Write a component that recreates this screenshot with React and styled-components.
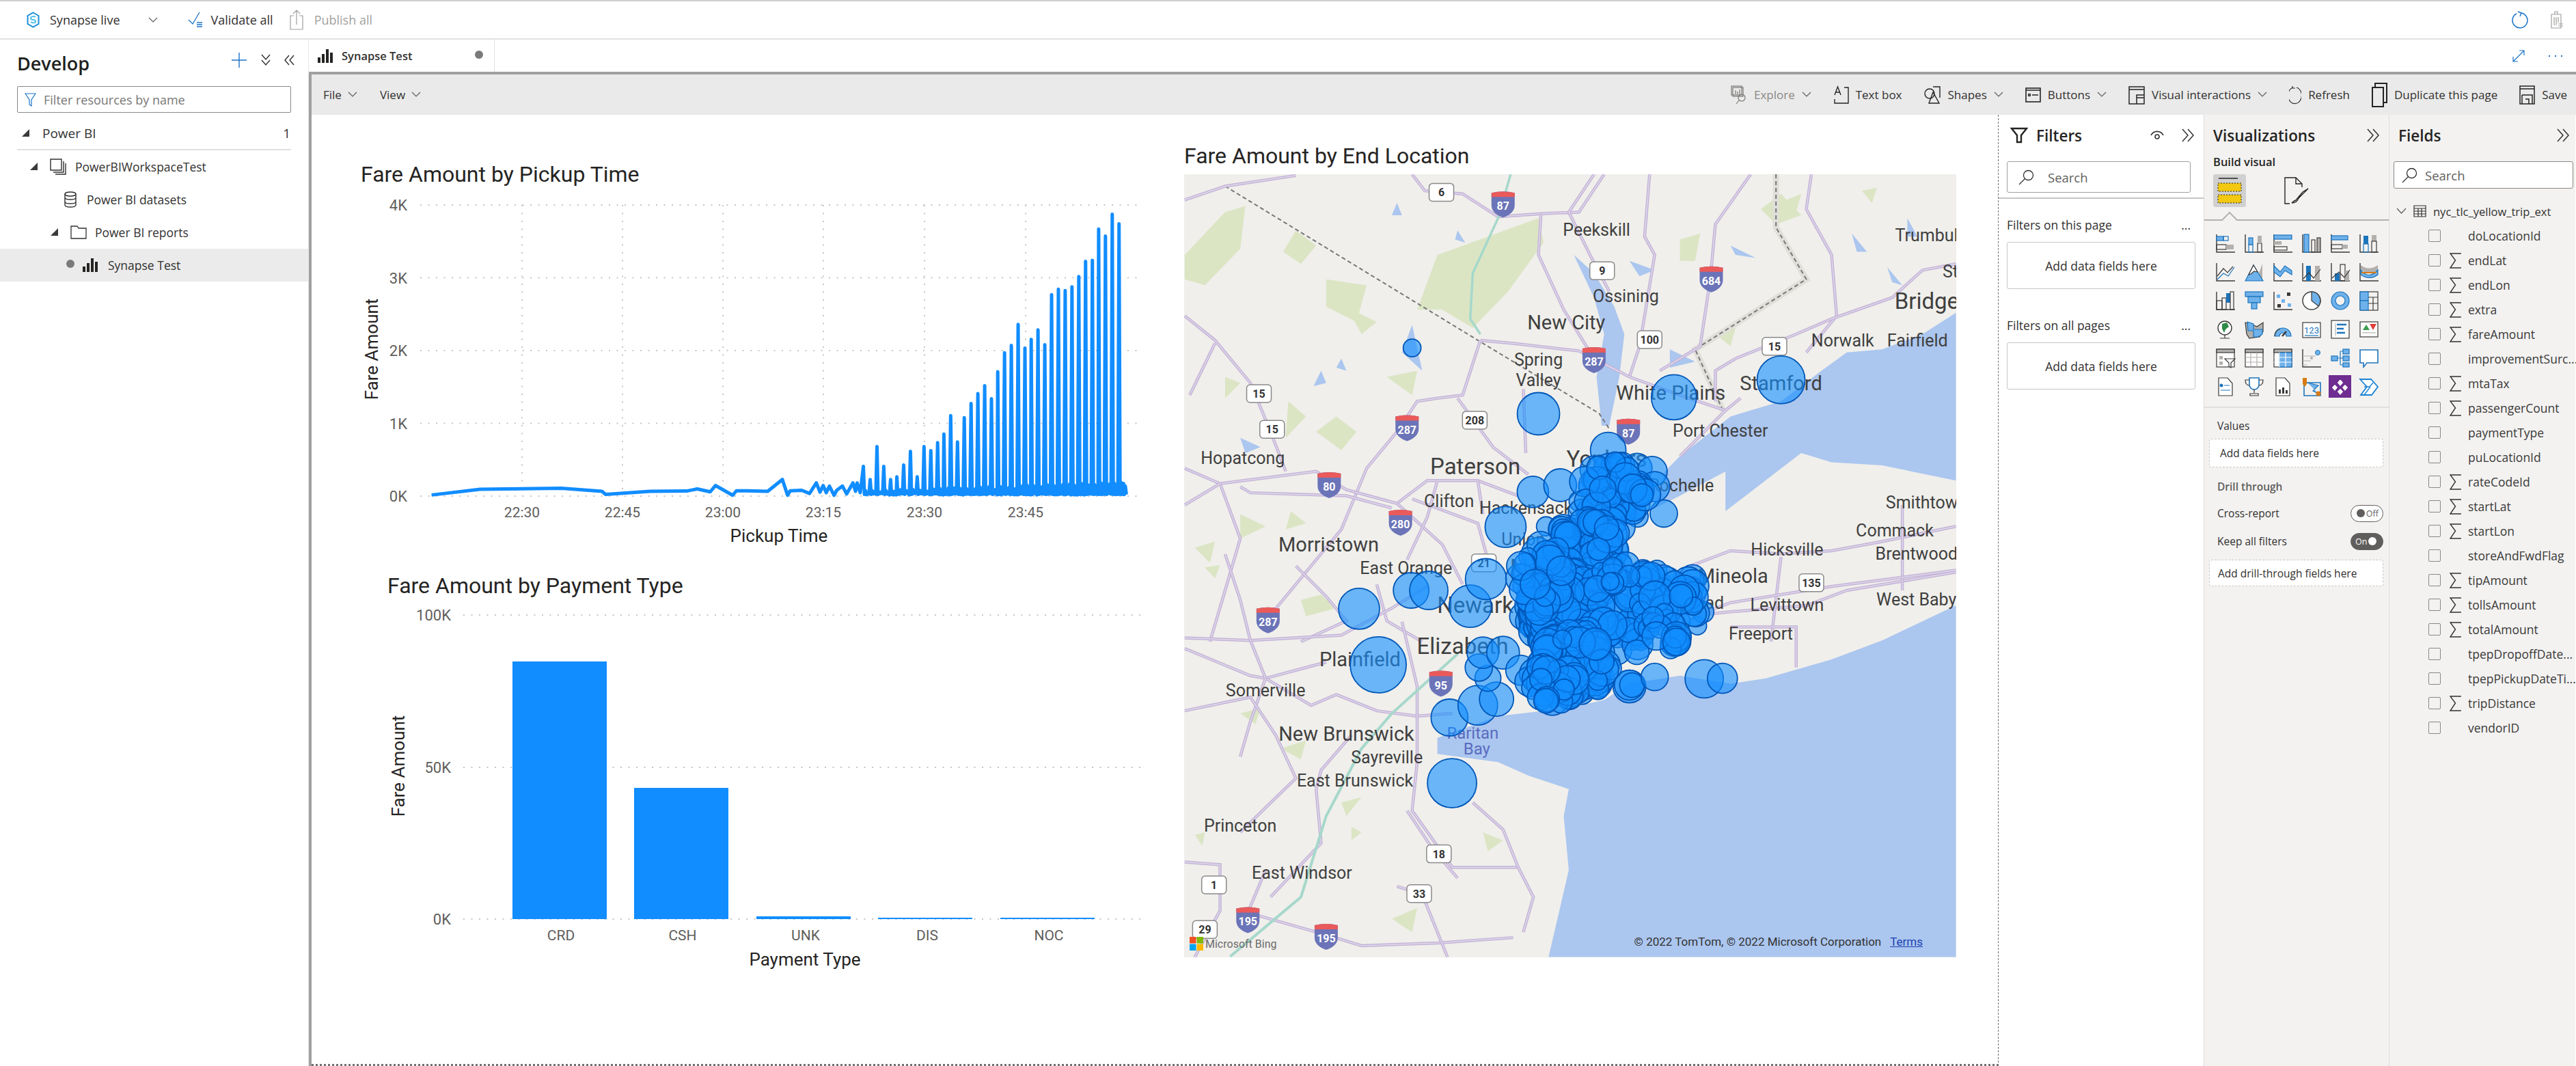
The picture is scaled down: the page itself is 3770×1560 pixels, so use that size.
import React from 'react'
import styled, { createGlobalStyle } from 'styled-components'

const UI_FONT = '"Open Sans", "Noto Sans", sans-serif'
const CHART_FONT = 'Roboto, "Liberation Sans", sans-serif'

const GlobalStyle = createGlobalStyle`
  html, body { margin: 0; padding: 0; background: #fff; }
  body { font-family: ${UI_FONT}; color: #323130; }
  * { box-sizing: border-box; }
`

const Page = styled.div`
  width: 3770px;
  height: 1560px;
  overflow: hidden;
  display: flex;
  flex-direction: column;
  border-top: 2px solid #cfcfcf;
  background: #fff;
`

const TopBar = styled.header`
  height: 56px;
  flex: none;
  display: flex;
  align-items: center;
  border-bottom: 2px solid #e1e1e1;
  font-size: 18px;
`

const TopItem = styled.div`
  display: flex;
  align-items: center;
  gap: ${p => p.$gap || 12}px;
  margin-left: ${p => p.$ml || 0}px;
  color: ${p => (p.$off ? '#a19f9d' : '#323130')};
`

const TopRight = styled.div`
  margin-left: auto;
  padding-right: 18px;
  display: flex;
  align-items: center;
  gap: 32px;
`

const Body = styled.div`
  flex: 1;
  min-height: 0;
  display: flex;
`

const Sidebar = styled.aside`
  width: 452px;
  flex: none;
  border-right: 1px solid #e6e6e6;
`

const SideHead = styled.div`
  height: 68px;
  padding: 0 25px;
  display: flex;
  align-items: center;
`

const SideTitle = styled.h2`
  margin: 0;
  font-size: 27px;
  font-weight: 600;
  color: #201f1e;
  flex: 1;
`

const SideActions = styled.div`
  display: flex;
  align-items: center;
  gap: 20px;
  margin-right: -5px;
  margin-top: -8px;
`

const FilterBox = styled.div`
  height: 39px;
  margin: 0 25px;
  border: 1px solid #8a8886;
  border-radius: 2px;
  display: flex;
  align-items: center;
  gap: 11px;
  padding-left: 10px;
  font-size: 18px;
  color: #797775;
`

const TreeRow = styled.div`
  height: 48px;
  display: flex;
  align-items: center;
  padding-left: ${p => p.$indent}px;
  font-size: ${p => p.$size || 17.5}px;
  color: #323130;
  background: ${p => (p.$selected ? '#ebebeb' : 'transparent')};
`

const RootRow = styled(TreeRow)`
  margin: 7px 25px 0;
  padding-left: 7px;
  height: 48px;
  border-bottom: 2px solid #e1e1e1;
  justify-content: flex-start;
`

const RowEnd = styled.span`
  margin-left: auto;
  padding-right: 1px;
`

const Tri = styled.span`
  width: 0;
  height: 0;
  margin-top: -2px;
  border-left: 11px solid transparent;
  border-bottom: 11px solid #3b3a39;
  margin-right: ${p => p.$mr}px;
`

const Dot = styled.span`
  width: 12px;
  height: 12px;
  margin-top: -4px;
  border-radius: 50%;
  background: #7a7a7a;
  margin-right: ${p => p.$mr || 0}px;
`

const Main = styled.main`
  flex: 1;
  min-width: 0;
  display: flex;
  flex-direction: column;
`

const TabRow = styled.div`
  height: 47px;
  flex: none;
  display: flex;
  align-items: center;
`

const Tab = styled.div`
  width: 272px;
  height: 100%;
  padding: 0 16px 0 13px;
  display: flex;
  align-items: center;
  gap: 12px;
  border-right: 1px solid #e1e1e1;
  font-size: 16.5px;
  color: #323130;
  span:last-child { margin-left: auto; margin-right: 0; }
`

const Frame = styled.div`
  flex: 1;
  min-height: 0;
  display: flex;
  flex-direction: column;
  border-top: 4px solid #a0a0a0;
  border-left: 4px solid #a0a0a0;
`

const Ribbon = styled.div`
  height: 59px;
  flex: none;
  background: #eaeaea;
  display: flex;
  align-items: center;
  padding: 0 13px 0 17px;
  font-size: 17px;
`

const RibbonMenu = styled.div`
  display: flex;
  align-items: center;
  gap: 9px;
  margin-right: 33px;
`

const RibbonRight = styled.div`
  margin-left: auto;
  display: flex;
  align-items: center;
  gap: 32px;
`

const RibbonItem = styled.div`
  display: flex;
  align-items: center;
  gap: 10px;
  color: ${p => (p.$off ? '#8a8886' : '#323130')};
`

const Workspace = styled.div`
  flex: 1;
  min-height: 0;
  display: flex;
`

const Canvas = styled.section`
  width: 2469px;
  flex: none;
  display: flex;
  background: #fff;
  border-right: 1px dashed #707070;
  border-bottom: 3px dotted #707070;
`

const LeftColumn = styled.div`
  width: 1277px;
  flex: none;
  padding-top: 66px;
`

const RightColumn = styled.div`
  padding-top: 39px;
`

const ChartTitle = styled.h3`
  margin: 0;
  height: 40px;
  line-height: 42px;
  padding-left: ${p => p.$left || 0}px;
  font-family: ${CHART_FONT};
  font-size: 32px;
  font-weight: 400;
  color: #252423;
  white-space: nowrap;
`

const ChartSvg = styled.svg`
  display: block;
  font-family: ${CHART_FONT};
`

const MapBox = styled.div`
  position: relative;
  width: 1130px;
  height: 1146px;
  margin-top: 8px;
  overflow: hidden;
  background: #f0efeb;
  font-family: ${CHART_FONT};
`

const MapLayer = styled.svg`
  position: absolute;
  left: 0;
  top: 0;
`

const MapLabel = styled.span`
  position: absolute;
  transform: translate(-50%, -50%);
  white-space: nowrap;
  font-size: ${p => p.$size}px;
  color: ${p => p.$color || '#3f3f3f'};
`

const Attribution = styled.div`
  position: absolute;
  right: 49px;
  bottom: 13px;
  display: flex;
  gap: 13px;
  font-size: 17px;
  color: #333;
  a { color: #1a3fb0; text-decoration: underline; }
`

const BingMark = styled.div`
  position: absolute;
  left: 8px;
  bottom: 10px;
  display: flex;
  align-items: center;
  gap: 3px;
  font-size: 16px;
  color: #6b6b6b;
`

const Panel = styled.aside`
  width: ${p => p.$w}px;
  flex: none;
  background: ${p => p.$bg || '#f3f2f1'};
  border-right: ${p => (p.$line ? '1px solid #dcdcdc' : 'none')};
`

const PanelHead = styled.div`
  height: 60px;
  padding: 0 ${p => p.$right || 13}px 0 ${p => p.$left}px;
  display: flex;
  align-items: center;
  gap: 12px;
  font-size: 22.5px;
  font-weight: 600;
  color: #252423;
  div { margin-left: auto; display: flex; align-items: center; gap: 26px; }
`

const SearchBox = styled.div`
  height: ${p => p.$h}px;
  width: ${p => p.$w}px;
  margin: 8px 0 0 ${p => p.$left}px;
  background: #fff;
  border: 1px solid ${p => p.$line || '#a19f9d'};
  border-radius: 3px;
  display: flex;
  align-items: center;
  gap: ${p => p.$gap}px;
  padding-left: ${p => p.$pad}px;
  font-size: ${p => p.$size || 18.5}px;
  color: #605e5c;
`

const Divider = styled.div`
  height: 2px;
  background: #c8c6c4;
  margin-top: 7px;
`

const FilterTitle = styled.div`
  display: flex;
  justify-content: space-between;
  align-items: center;
  padding: 0 19px 0 12px;
  margin-top: ${p => p.$mt}px;
  height: 26px;
  font-size: 17.5px;
  color: #323130;
`

const FilterDrop = styled.div`
  width: 276px;
  height: 69px;
  margin: 12px 0 0 12px;
  background: #fff;
  border: 1px solid #c8c6c4;
  border-radius: 3px;
  display: flex;
  align-items: center;
  justify-content: center;
  font-size: 17.5px;
  color: #323130;
`

const BuildLabel = styled.div`
  height: 22px;
  margin-top: -2px;
  padding-left: 13px;
  line-height: 22px;
  font-size: 16.5px;
  font-weight: 600;
  color: #252423;
`

const VizTabs = styled.div`
  position: relative;
  height: 68px;
  margin-top: 7px;
  padding-left: 13px;
  display: flex;
  align-items: flex-start;
  gap: 50px;
  border-bottom: 2px solid #b3b0ad;
  &::after {
    content: '';
    position: absolute;
    left: 29px;
    bottom: -8px;
    width: 14px;
    height: 14px;
    background: #f3f2f1;
    border-left: 2px solid #b3b0ad;
    border-top: 2px solid #b3b0ad;
    transform: rotate(45deg);
  }
`

const VizTabButton = styled.div`
  width: 48px;
  height: 48px;
  border-radius: 3px;
  display: flex;
  align-items: center;
  justify-content: center;
  background: ${p => (p.$active ? '#d0d0d0' : 'transparent')};
`

const VizGrid = styled.div`
  display: grid;
  grid-template-columns: repeat(6, 28px);
  grid-auto-rows: 28px;
  gap: 14px;
  padding: 19px 0 15px 17px;
  border-bottom: 2px solid #e1dfdd;
`

const WellLabel = styled.div`
  padding-left: 19px;
  margin-top: ${p => p.$mt}px;
  height: 22px;
  line-height: 22px;
  font-size: 15.5px;
  font-weight: ${p => (p.$bold ? 600 : 400)};
  color: ${p => (p.$bold ? '#605e5c' : '#323130')};
`

const Well = styled.div`
  width: 255px;
  height: ${p => p.$h}px;
  margin: ${p => p.$mt}px 0 0 7px;
  padding-left: ${p => p.$pad}px;
  background: #fff;
  border: 1px dashed #c8c6c4;
  border-radius: 3px;
  display: flex;
  align-items: center;
  font-size: 15.5px;
  color: #323130;
`

const SwitchRow = styled.div`
  height: 26px;
  width: 262px;
  margin-top: ${p => p.$mt}px;
  padding-left: 19px;
  display: flex;
  align-items: center;
  justify-content: space-between;
  font-size: 15.5px;
  color: #323130;
`

const Switch = styled.div`
  width: 48px;
  height: 25px;
  border-radius: 13px;
  border: 1px solid #605e5c;
  background: ${p => (p.$on ? '#605e5c' : '#fff')};
  color: ${p => (p.$on ? '#fff' : '#605e5c')};
  display: flex;
  flex-direction: ${p => (p.$on ? 'row-reverse' : 'row')};
  align-items: center;
  justify-content: flex-end;
  gap: 2px;
  padding: 0 6px;
  font-size: 12.5px;
  &::before {
    content: '';
    width: 12px;
    height: 12px;
    border-radius: 50%;
    background: ${p => (p.$on ? '#fff' : '#605e5c')};
  }
`

const TableRow = styled.div`
  height: 36px;
  margin-top: 15px;
  padding-left: 10px;
  display: flex;
  align-items: center;
  font-size: 16.5px;
  color: #323130;
  white-space: nowrap;
`

const FieldRow = styled.div`
  height: 36px;
  display: flex;
  align-items: center;
  padding-left: 57px;
  font-size: 17.5px;
  color: #3b3a39;
  white-space: nowrap;
`

const CheckBox = styled.span`
  width: 18px;
  height: 18px;
  flex: none;
  background: #f3f2f1;
  border: 1px solid #8a8886;
  border-radius: 2px;
`

const SigmaSlot = styled.span`
  width: 40px;
  flex: none;
  padding-left: 13px;
  display: flex;
`

/* icons */
const Line = styled.svg`
  display: block;
  flex: none;
  fill: none;
  stroke: ${p => p.$c || '#323130'};
  stroke-width: ${p => p.$sw || 1.2};
`

const Chevron = ({ c = '#605e5c' }) => (
  <Line width="14" height="9" viewBox="0 0 14 9" $c={c}><path d="M1 1l6 6 6-6" /></Line>
)
const DoubleRight = ({ c = '#323130' }) => (
  <Line width="19" height="20" viewBox="0 0 19 20" $c={c} $sw={1.5}><path d="M1 1l8 9-8 9M9 1l8 9-8 9" /></Line>
)
const Magnifier = () => (
  <Line width="23" height="23" viewBox="0 0 23 23" $c="#323130" $sw={1.3}>
    <circle cx="14.5" cy="8.5" r="7" /><path d="M9.5 13.5L1 22" />
  </Line>
)
const Bars = ({ c = '#252423' }) => (
  <svg width="23" height="20" viewBox="0 0 23 20" fill={c} style={{ flex: 'none' }}>
    <rect x="0" y="12" width="4" height="8" /><rect x="6" y="7" width="4" height="13" />
    <rect x="12" y="0" width="4" height="20" /><rect x="18" y="5" width="4" height="15" />
  </svg>
)
const Sigma = () => (
  <Line width="17" height="23" viewBox="0 0 17 23" $c="#323130" $sw={1.4}><path d="M16 2V1H1l7.5 10L1 22h15v-1" /></Line>
)
const SynapseMark = () => (
  <Line width="19" height="24" viewBox="0 0 19 24" $c="#1a8fd8" $sw={2}>
    <path d="M9.5 1.5l8 4.5v12l-8 4.5-8-4.5V6z" /><path d="M13 8c-3-2-7-1-7 2s7 1 7 4-4 3-7 1" stroke="#50c0e8" />
  </Line>
)

const ribbonIcons = {
  explore: (
    <Line width="24" height="28" viewBox="0 0 24 28" $c="#797775">
      <rect x="1" y="1" width="15" height="13" /><rect x="3" y="3" width="15" height="13" /><path d="M7 7v6M10 9v4M13 6v7" />
      <circle cx="16" cy="18" r="5" /><path d="M12 22l-4 5" />
    </Line>
  ),
  text: (
    <Line width="23" height="28" viewBox="0 0 23 28" $c="#252423" $sw={1.4}>
      <path d="M16 3h6v23H2v-6" /><path d="M2 14L6.5 2 11 14M3.5 10h6" />
    </Line>
  ),
  shapes: (
    <Line width="25" height="28" viewBox="0 0 25 28" $c="#252423" $sw={1.4}>
      <circle cx="8" cy="12" r="7" /><path d="M13 2h10v16M13 10l-6 16h15z" />
    </Line>
  ),
  buttons: (
    <Line width="23" height="24" viewBox="0 0 23 24" $c="#252423" $sw={1.6}>
      <rect x="1" y="2" width="21" height="20" /><circle cx="6" cy="12" r="1.5" /><path d="M10 12h9M1 5h21" />
    </Line>
  ),
  interact: (
    <Line width="24" height="28" viewBox="0 0 24 28" $c="#252423" $sw={1.5}>
      <rect x="1" y="2" width="22" height="25" /><path d="M1 6h22M12 27V14h11M12 18h11" />
    </Line>
  ),
  refresh: (
    <Line width="18" height="28" viewBox="0 0 18 28" $c="#323130">
      <path d="M11 3a10 12 0 1 1-5 0" /><path d="M5 1v3h4" />
    </Line>
  ),
  duplicate: (
    <Line width="23" height="36" viewBox="0 0 23 36" $c="#252423" $sw={2}>
      <rect x="1" y="7" width="16" height="28" /><path d="M5 7V1h17v28h-5" />
    </Line>
  ),
  save: (
    <Line width="23" height="28" viewBox="0 0 23 28" $c="#252423" $sw={1.5}>
      <rect x="1" y="1" width="21" height="26" /><path d="M1 5h21M4 14h15v13M4 14v13M9 20h5v7" />
    </Line>
  ),
}

/* visualization gallery */
const BLUE = '#1c74bb'
const SKY = '#6fb1ea'
const GREY = '#b3b0ad'
const INK = '#3b3a39'

const Axis = () => <path d="M1 1v26h27" stroke={INK} strokeWidth="1.4" fill="none" />
const B = ({ x, y, w, h, f = 'none', s = 'none' }) => (
  <rect x={x} y={y} width={w} height={h} fill={f} stroke={s} strokeWidth="1.2" />
)
const P = ({ d, f = 'none', s = INK, w = 1.2 }) => <path d={d} fill={f} stroke={s} strokeWidth={w} />

const vizIcons = [
  <><Axis /><B x={1} y={4} w={10} h={6} f={SKY} s={BLUE} /><B x={11} y={4} w={7} h={6} s={BLUE} /><B x={1} y={16} w={14} h={7} s={INK} /><B x={15} y={16} w={11} h={7} f={GREY} /></>,
  <><Axis /><B x={6} y={16} w={6} h={11} s={BLUE} /><B x={6} y={6} w={6} h={10} f={SKY} s={BLUE} /><B x={19} y={14} w={6} h={13} s={INK} /><B x={19} y={3} w={6} h={11} f={GREY} /></>,
  <><Axis /><B x={1} y={2} w={26} h={6} f={SKY} s={BLUE} /><B x={1} y={11} w={11} h={5} f={GREY} /><B x={1} y={19} w={19} h={5} s={INK} /></>,
  <><Axis /><B x={3} y={1} w={7} h={26} f={SKY} s={BLUE} /><B x={14} y={9} w={5} h={18} s={INK} /><B x={22} y={6} w={5} h={21} f={GREY} s={INK} /></>,
  <><Axis /><B x={1} y={3} w={24} h={6} f={SKY} s={BLUE} /><B x={1} y={16} w={16} h={6} s={INK} /><B x={17} y={16} w={8} h={6} f={GREY} /></>,
  <><Axis /><B x={6} y={3} w={7} h={12} f={BLUE} /><B x={6} y={15} w={7} h={12} s={BLUE} /><B x={18} y={2} w={7} h={9} f={GREY} /><B x={18} y={11} w={7} h={16} s={INK} /></>,
  <><Axis /><P d="M2 20l9-11 6 6 8-9" s={INK} /><P d="M2 25l9-9 7 4 9-13" s={BLUE} /></>,
  <><P d="M1 27L13 6l7 13 6-17v25z" f={GREY} s="none" /><P d="M1 27L13 4l14 23z" f={SKY} s={BLUE} /><P d="M6 18l7-14 6 10-5-1-5 4z" f="#fff" s={INK} /></>,
  <><Axis /><P d="M1 5l9 9 7-9 10 7v6l-10-6-7 9-9-7z" f={SKY} s={BLUE} /></>,
  <><Axis /><B x={6} y={5} w={7} h={22} f={BLUE} /><B x={19} y={5} w={7} h={22} f={GREY} /><P d="M2 24l8-9 7 8 10-13" /></>,
  <><Axis /><B x={6} y={16} w={7} h={11} f={BLUE} /><B x={14} y={3} w={7} h={24} s={INK} /><B x={21} y={12} w={6} h={15} f={GREY} /><P d="M2 23l10-9 8 8 8-11" /></>,
  <><Axis /><P d="M2 4c8 6 16 6 25 0v7c-8 6-16 6-25 0z" f={GREY} s="none" /><P d="M2 11c8 10 16 10 25 0v7c-8 6-16 6-25 0z" f={SKY} s={BLUE} /><P d="M3 15h22" s="#d77a14" w={2} /></>,
  <><Axis /><B x={1} y={14} w={8} h={13} s={INK} /><B x={9} y={10} w={6} h={17} s={INK} /><B x={15} y={3} w={6} h={14} f={BLUE} /><B x={21} y={1} w={5} h={26} s={INK} /></>,
  <><B x={1} y={1} w={26} h={7} f={SKY} s={BLUE} /><B x={5} y={8} w={18} h={9} f={SKY} s={BLUE} /><B x={10} y={17} w={8} h={9} f={SKY} s={BLUE} /></>,
  <><Axis /><B x={5} y={5} w={5} h={5} f={SKY} /><B x={20} y={2} w={5} h={5} f={INK} /><B x={12} y={12} w={5} h={5} f={SKY} /><B x={6} y={19} w={5} h={5} f={INK} /><B x={21} y={18} w={5} h={5} f={SKY} /></>,
  <><circle cx="14" cy="14" r="13" fill="#fff" stroke={INK} strokeWidth="1.4" /><P d="M14 14V1a13 13 0 0 1 10 21z" f={SKY} s={INK} /></>,
  <><circle cx="14" cy="14" r="10" fill="none" stroke={SKY} strokeWidth="6" /><circle cx="14" cy="14" r="13" fill="none" stroke={BLUE} strokeWidth="1.2" /><circle cx="14" cy="14" r="7" fill="none" stroke={BLUE} strokeWidth="1.2" /></>,
  <><B x={1} y={1} w={26} h={27} s={INK} /><B x={1} y={1} w={12} h={13} f={SKY} s={BLUE} /><B x={1} y={14} w={12} h={14} f={SKY} s={BLUE} /><P d="M13 9h14M20 9v19M13 18h14" /></>,
  <><circle cx="13" cy="12" r="10" fill="#fff" stroke={INK} strokeWidth="1.4" /><P d="M9 6l7-2 3 6-5 4-2 5-3-6z" f="#2e8b47" s="none" /><P d="M6 27h14M13 22v5" /></>,
  <><P d="M1 4l10 3 7 3 9-6v13l-5 8-7 1-8 1-4-6z" f={GREY} s={INK} /><P d="M4 3l9 3v8h13v7l-6 4h-7v-9H5z" f={SKY} s={BLUE} /></>,
  <><P d="M2 24a12 12 0 0 1 24 0h-7a5 5 0 0 0-10 0z" f={SKY} s={BLUE} /><P d="M2 24a12 12 0 0 1 8-11" s={INK} /><P d="M13 24l6-7" s={INK} w={2.5} /></>,
  <><B x={1} y={4} w={26} h={22} f="#fff" s={INK} /><text x="14" y="20" fontSize="13" textAnchor="middle" fill={BLUE} fontFamily="Roboto">123</text><P d="M4 23h20" s={BLUE} /></>,
  <><B x={1} y={1} w={26} h={26} f="#fff" s={INK} /><P d="M7 5v18" s={GREY} /><P d="M9 7h14M9 13h10M9 19h12" s={BLUE} w={2.5} /></>,
  <><B x={1} y={3} w={26} h={22} f="#fff" s={INK} /><P d="M5 15l5-8 5 8z" f="#3c9b4e" s="none" /><P d="M15 6h10l-5 9z" f="#e03c3c" s="none" /><P d="M4 19h20" s={GREY} /></>,
  <><B x={1} y={1} w={26} h={26} f="#fff" s={INK} /><B x={1} y={1} w={26} h={5} f={GREY} s={INK} /><B x={5} y={11} w={5} h={5} f={GREY} /><B x={5} y={19} w={5} h={5} f={GREY} /><P d="M13 15h15l-6 6v7l-3-2v-5z" f="#fff" s={INK} /></>,
  <><B x={1} y={1} w={26} h={26} f="#fff" s={INK} /><B x={1} y={1} w={26} h={5} f={GREY} s={INK} /><P d="M1 13h26M1 20h26M9 6v21M18 6v21" s={GREY} /></>,
  <><B x={1} y={1} w={26} h={26} f="#fff" s={INK} /><B x={1} y={1} w={26} h={5} f={GREY} s={INK} /><B x={9} y={6} w={18} h={21} f={SKY} s={BLUE} /><P d="M1 13h26M1 20h26M9 6v21M18 6v21" s="#fff" /></>,
  <><Axis /><P d="M1 11h19M1 18h12M1 24h6" s={GREY} /><circle cx="23" cy="6" r="3.5" fill={SKY} stroke={BLUE} /><circle cx="14" cy="14" r="2" fill={GREY} /></>,
  <><B x={1} y={11} w={9} h={7} f={SKY} s={BLUE} /><B x={18} y={1} w={9} h={7} f={SKY} s={BLUE} /><B x={18} y={11} w={9} h={7} f={SKY} s={BLUE} /><B x={18} y={21} w={9} h={6} f={SKY} s={BLUE} /><P d="M10 14h8M14 4v20M14 4h4M14 24h4" s={BLUE} /></>,
  <><P d="M1 2h26v19H11l-5 6v-6H1z" f="#fff" s={BLUE} w={1.6} /></>,
  <><P d="M4 1h13l7 8v18H4z" f="#fff" s={INK} /><circle cx="8" cy="12" r="2.5" fill={BLUE} /><P d="M12 12h8M7 19h14" s={BLUE} /></>,
  <><P d="M7 1h14v10a7 7 0 0 1-14 0z" f="#fff" s={BLUE} w={1.6} /><P d="M7 4H1c0 6 3 8 6 8M21 4h6c0 6-3 8-6 8M14 18v5M8 27h12v-3H8z" s={INK} /></>,
  <><P d="M4 1h13l7 8v18H4z" f="#fff" s={INK} /><B x={8} y={18} w={3} h={6} f={INK} /><B x={13} y={15} w={3} h={9} f={INK} /><B x={18} y={19} w={3} h={5} f={INK} /></>,
  <><P d="M3 8h24v19H3z" s={BLUE} w={1.6} /><P d="M8 8l16 4-8 8 8 4" f={SKY} s={BLUE} /><P d="M1 1h6v9l-3 4-3-4z" f="#d77a14" s="none" /><circle cx="24" cy="24" r="3.5" fill="#d77a14" /></>,
  <><B x={-3} y={-3} w={33} h={33} f="#6f2c91" /><P d="M14 2l5 6-5 6-5-6zM6 10l5 5-5 6-5-6zM21 10l5 5-5 6-5-6zM14 16l5 5-5 6-5-6z" f="#fff" s="#6f2c91" /></>,
  <><P d="M1 3h16l10 11-9 12H2l9-12z" f="#fff" s="#1a83d4" w={1.8} /><P d="M7 14h8l5-6M7 26l9-12" s="#1a83d4" w={1.4} /></>,
]

const VizIcon = ({ children }) => <svg width="28" height="28" viewBox="0 0 28 28" style={{ overflow: 'visible' }}>{children}</svg>

/* charts */
const pickupLabels = [['22:30', 764], ['22:45', 911], ['23:00', 1058], ['23:15', 1205], ['23:30', 1353], ['23:45', 1501]]
const toX = zx => zx / 1.307 + 500
const toY = zy => zy / 2.6 + 220

let seed = 17
const rand = () => {
  seed = (seed * 16807) % 2147483647
  return seed / 2147483647
}

const lowPart = [[172, 1314], [265, 1292], [420, 1288], [498, 1300], [505, 1312], [590, 1300], [660, 1299], [680, 1291], [705, 1302], [715, 1278], [748, 1315], [755, 1298], [775, 1298], [815, 1300], [843, 1255], [853, 1315], [858, 1298], [880, 1296], [895, 1308], [908, 1268], [915, 1303], [921, 1278], [927, 1305], [933, 1280], [942, 1315], [947, 1296], [958, 1280], [966, 1310], [978, 1268], [983, 1300], [986, 1268], [992, 1305]]
const peaks = [[998, 1205], [1011, 1255], [1024, 1130], [1037, 1205], [1050, 1255], [1062, 1245], [1075, 1200], [1088, 1148], [1101, 1245], [1114, 1130], [1127, 1145], [1140, 1115], [1152, 1082], [1165, 1012], [1178, 1112], [1191, 1020], [1204, 966], [1217, 928], [1230, 898], [1243, 948], [1255, 845], [1268, 773], [1281, 745], [1294, 665], [1307, 755], [1319, 722], [1332, 686], [1345, 742], [1358, 552], [1371, 531], [1384, 536], [1397, 522], [1410, 483], [1423, 425], [1436, 421], [1448, 302], [1461, 329], [1474, 246], [1487, 282]]

const buildPickupLine = () => {
  const pts = [...lowPart]
  peaks.forEach(([x, y], i) => {
    pts.push([x, y], [x + 2, 1312])
    const top = 1298 - (i / peaks.length) * 34
    for (let k = 1; k < 5; k++) {
      pts.push([x + 2 + k * 2.2, k % 2 ? top + rand() * 12 : 1314 - rand() * 6])
    }
  })
  pts.push([1494, 1270], [1497, 1312], [1499, 1280], [1501, 1312])
  return pts.map(([x, y]) => `${toX(x) - 456},${toY(y) - 275}`).join(' ')
}
const pickupLine = buildPickupLine()

const GridLine = styled.line`
  stroke: #c8c6c4;
  stroke-width: 2;
  stroke-dasharray: 2 9.5;
`
const Tick = styled.text`
  font-size: ${p => p.$size || 21}px;
  fill: #605e5c;
`
const AxisName = styled.text`
  font-size: ${p => p.$size || 26}px;
  fill: #252423;
`

const PickupChart = () => (
  <ChartSvg width="1277" height="562" viewBox="0 0 1277 562">
    {[26, 132.5, 239, 345.5, 452].map(y => <GridLine key={y} x1="159" x2="1211" y1={y} y2={y} />)}
    {pickupLabels.map(([, x]) => <GridLine key={x} x1={x - 456} x2={x - 456} y1="26" y2="452" />)}
    {['4K', '3K', '2K', '1K', '0K'].map((t, i) => (
      <Tick key={t} x="140" y={26 + i * 106.5 + 8} textAnchor="end" $size={22}>{t}</Tick>
    ))}
    {pickupLabels.map(([t, x]) => <Tick key={t} x={x - 456} y="483" textAnchor="middle">{t}</Tick>)}
    <polyline points={pickupLine} fill="none" stroke="#118dff" strokeWidth="5" strokeLinejoin="round" />
    <AxisName x="684" y="519" textAnchor="middle">Pickup Time</AxisName>
    <AxisName x="0" y="0" textAnchor="middle" transform="translate(97 237) rotate(-90)">Fare Amount</AxisName>
  </ChartSvg>
)

const payBars = [['CRD', 750, 969, 821], ['CSH', 928, 1154, 999], ['UNK', 1107, 1342, 1179], ['DIS', 1285, 1344, 1357], ['NOC', 1464, 1344, 1535]]

const PaymentChart = () => (
  <ChartSvg width="1277" height="560" viewBox="0 0 1277 560">
    {[24, 247, 469].map(y => <GridLine key={y} x1="222" x2="1218" y1={y} y2={y} />)}
    {['100K', '50K', '0K'].map((t, i) => (
      <Tick key={t} x="204" y={[32, 255, 477][i]} textAnchor="end" $size={22}>{t}</Tick>
    ))}
    {payBars.map(([t, x, top, mid]) => (
      <g key={t}>
        <rect x={x - 456} y={top - 877} width="138" height={1346 - top} fill="#118dff" />
        <Tick x={mid - 456} y="500" textAnchor="middle">{t}</Tick>
      </g>
    ))}
    <AxisName x="722" y="537" textAnchor="middle">Payment Type</AxisName>
    <AxisName x="0" y="0" textAnchor="middle" transform="translate(136 245) rotate(-90)">Fare Amount</AxisName>
  </ChartSvg>
)

/* map: points are read off two views of the map, v7 covers the top and v8 the bottom */
const v7 = (x, y) => [x / 1.352 - 14, y / 2.24 - 16]
const v8 = (x, y) => [x / 1.352 - 14, y / 2.53 + 544]
const pts = (s, f) => s.split(' ').map(p => f(...p.split(',').map(Number)).join(',')).join(' ')

const soundShape = '1546,490 1480,560 1400,610 1330,620 1280,680 1200,780 1100,830 1000,960 970,1010 950,1130 1000,1090 1090,1010 1090,1140 1130,1090 1200,1000 1240,950 1300,980 1400,990 1546,1040'
const oceanShape = '1546,220 1400,350 1300,420 1170,490 1100,510 1000,480 900,510 850,570 780,600 640,630 520,710 520,770 640,800 700,850 780,900 770,1000 780,1200 740,1522 1546,1522'
const hudsonShape = '790,300 830,360 870,470 890,560 880,700 860,860 845,860 835,700 850,560 830,440'
const forests7 = [
  '20,300 100,160 140,140 130,280 60,400 20,380',
  '480,480 520,300 620,240 720,180 730,260 660,420 590,540 530,480',
  '300,380 380,400 360,520 300,470',
  '280,880 320,830 360,880 330,940',
  '1160,150 1200,100 1240,170 1190,200',
  '1000,250 1040,230 1030,320 1000,320',
  '420,700 480,680 470,760',
  '225,780 260,830 220,900',
  '1360,90 1390,80 1380,130',
  '240,220 280,270 250,330 215,290',
  '340,470 400,520 370,560',
  '100,700 130,720 100,770',
  '1210,120 1240,100 1230,160',
  '1070,560 1110,540 1100,600',
  '130,1150 180,1190 130,1230',
  '230,1140 260,1180 220,1200',
  '40,1260 80,1240 70,1310',
]
const forests8 = [
  '250,200 290,180 320,230 260,260',
  '210,750 260,720 250,790',
  '430,1380 480,1340 470,1430',
  '330,950 370,930 340,1000',
  '1170,490 1300,440 1420,360 1410,380 1280,460 1180,510',
  '610,1060 650,1090 620,1130',
  '350,1040 370,1060 350,1090',
  '60,80 90,70 80,120',
  '130,620 170,600 160,660',
  '740,740 780,860 770,880 750,800',
  '40,1070 60,1060 55,1110',
]
const lakes7 = ['440,130 450,170 430,170', '560,220 575,260 555,250', '1100,270 1150,310 1110,300', '1340,230 1370,290 1350,290', '470,530 490,680 450,620', '130,900 170,930 140,950', '290,680 300,720 275,730', '980,610 1030,650 980,670', '900,320 950,350 920,370', '1450,180 1470,240 1450,240', '330,640 340,680 320,670', '1410,340 1440,400 1420,390']
const roads7 = [
  '20,120 100,75 240,40', '470,36 495,90 570,100 640,175 725,165 800,160 850,36',
  '725,165 720,300 770,480 830,640', '830,36 780,160 825,310 860,420', '940,36 930,240 950,300 920,600 900,700',
  '1140,36 1070,200 1060,380 1040,600 1020,620 960,680', '1260,36 1250,150 1300,300 1310,500 1250,620',
  '1546,330 1480,350 1420,440 1300,510 1230,560 1110,640 1070,680 1070,780',
  '605,580 670,590 800,615 830,640 900,700 1000,760 1090,810 1120,770',
  '605,580 570,760 520,770 480,780 440,880 380,1000 330,1200 280,1300 180,1500',
  '20,500 80,580 150,720 190,880 220,1010', '80,590 30,760',
  '20,1000 90,1050 280,1010 340,1070 440,1115 500,1040 600,1040 680,1090', '90,1050 130,1230 100,1400 70,1568',
  '440,1115 530,1250 570,1380', '560,770 630,930 700,1020', '690,740 695,950', '1000,960 1090,810',
  '1546,1190 1400,1240 1300,1270 1200,1280 1100,1270 1020,1320', '1546,1340 1330,1400 1250,1450 1100,1470 1040,1480',
  '1440,1120 1440,1400', '1200,1290 1180,1568', '20,1120 90,1050',
  '130,1060 150,1080 340,1090 430,1130', '470,1100 600,1180 620,1300', '520,1040 500,1160 460,1300', '600,1040 610,1150',
  '240,1320 300,1420 340,1500 250,1568', '400,1380 420,1500 490,1568',
]
const roads8 = [
  '20,340 150,350 330,330 430,230 500,150', '20,380 150,480 180,490 300,430',
  '180,490 270,590 320,550 400,610 480,630 550,620', '100,30 130,200 150,350 180,490 150,650 130,780',
  '280,900 290,1100 190,1300', '20,1170 90,1180 90,1350 40,1522',
  '150,1360 300,1440 370,1480 520,1470 670,1450', '450,280 480,520 480,800 470,980 550,1190 680,1190 710,1300 690,1430',
  '590,950 650,1050 680,1190', '460,980 510,1120 560,1230', '440,1260 490,1290 540,1522',
  '1546,90 1300,150 1100,210 1030,260', '1100,300 1230,300 1230,450',
  '20,610 150,560 200,700 240,860 130,1060', '350,700 290,830 280,900', '180,1200 140,1380',
]

const interstates = [
  ['87', v7(650, 135)], ['684', v7(1062, 380)], ['287', v7(830, 645)], ['87', v7(898, 880)], ['287', v7(460, 868)],
  ['80', v7(306, 1055)], ['280', v7(447, 1178)], ['287', v7(185, 1498)], ['95', v8(527, 510)], ['195', v8(145, 1385)], ['195', v8(300, 1447)],
]
const routes = [
  ['6', v7(528, 95)], ['9', v7(846, 352)], ['100', v7(940, 578)], ['15', v7(1187, 600)], ['15', v7(167, 755)], ['15', v7(193, 872)],
  ['208', v7(594, 842)], ['135', v7(1260, 1375)], ['21', v7(612, 1310)], ['18', v8(523, 1140)], ['33', v8(484, 1287)], ['1', v8(78, 1255)], ['29', v8(60, 1420)],
]
const places = [
  ['Peekskill', v7(835, 217), 25], ['Ossining', v7(893, 435), 25], ['New City', v7(775, 522), 29], ['Spring', v7(720, 643), 25], ['Valley', v7(720, 711), 25],
  ['White Plains', v7(982, 752), 29], ['Stamford', v7(1200, 722), 29], ['Trumbull', v7(1492, 235), 25], ['Stratford', v7(1586, 355), 25], ['Bridgeport', v7(1529, 450), 33],
  ['Norwalk', v7(1322, 580), 25], ['Fairfield', v7(1470, 580), 25], ['Port Chester', v7(1080, 875), 25], ['Hopatcong', v7(135, 965), 25], ['Paterson', v7(595, 993), 33],
  ['Yonkers', v7(855, 968), 33], ['Clifton', v7(543, 1107), 25], ['Hackensack', v7(695, 1130), 25], ['New Rochelle', v7(965, 1055), 25], ['Smithtown', v7(1488, 1110), 25],
  ['Commack', v7(1425, 1203), 25], ['Hicksville', v7(1212, 1265), 25], ['Brentwood', v7(1468, 1280), 25], ['Morristown', v7(305, 1250), 29], ['East Orange', v7(458, 1327), 25],
  ['Union', v7(690, 1232), 25], ['Newark', v7(595, 1447), 33], ['New York', v7(777, 1330), 40], ['Mineola', v7(1105, 1353), 29], ['Levittown', v7(1212, 1447), 25], ['West Babylon', v7(1491, 1428), 25],
  ['Hempstead', v7(1000, 1440), 25], ['Freeport', v8(1160, 325), 25], ['Elizabeth', v8(570, 370), 33], ['Plainfield', v8(367, 420), 29], ['Somerville', v8(180, 533), 25],
  ['New Brunswick', v8(340, 695), 29], ['Sayreville', v8(420, 783), 25], ['East Brunswick', v8(357, 868), 25], ['Princeton', v8(130, 1035), 25], ['East Windsor', v8(252, 1210), 25],
]
const bayNames = [['Raritan', v8(590, 693)], ['Bay', v8(598, 752)]]

const bubbles = [
  [...v7(470, 605), 13], [...v7(720, 821), 31], [...v7(988, 767), 33], [...v7(1200, 710), 35], [...v7(858, 940), 26], [...v7(709, 1077), 23], [...v7(763, 1055), 24],
  [...v7(655, 1192), 30], [...v7(365, 1460), 30], [...v7(468, 1400), 26], [...v7(503, 1400), 28], [...v7(585, 1452), 31], [...v7(616, 1363), 30], [...v7(968, 1148), 20], [...v7(735, 1190), 14], [...v7(690, 1485), 20],
  [...v7(860, 1000), 22], [...v7(915, 1000), 22], [...v7(945, 1010), 22], [...v7(950, 1060), 22],
  [...v8(403, 440), 41], [...v8(549, 878), 36], [...v8(544, 635), 27], [...v8(600, 590), 29], [...v8(637, 567), 25], [...v8(620, 490), 19], [...v8(602, 450), 20], [...v8(610, 395), 23], [...v8(650, 395), 24], [...v8(685, 460), 22],
  [...v8(900, 520), 24], [...v8(900, 515), 22], [...v8(905, 515), 18], [...v8(950, 485), 20], [...v8(1048, 492), 28], [...v8(1084, 490), 22], [...v8(1025, 120), 20],
]
const clusters = [
  [625, 470, 50, 50, 60], [590, 555, 50, 55, 100], [555, 640, 50, 60, 240], [655, 635, 105, 65, 120], [570, 715, 55, 50, 110], [540, 745, 35, 30, 30], [700, 670, 25, 35, 15], [525, 590, 35, 50, 40],
]
clusters.forEach(([cx, cy, rx, ry, n]) => {
  for (let i = 0; i < n; i++) {
    const a = rand() * Math.PI * 2
    const d = Math.sqrt(rand())
    bubbles.push([cx + Math.cos(a) * rx * d, cy + Math.sin(a) * ry * d, 13 + rand() * 11])
  }
})

const MapBase = () => (
  <MapLayer width="1130" height="1146" viewBox="0 0 1130 1146">
    {forests7.map(s => <polygon key={s} points={pts(s, v7)} fill="#dbe5c4" />)}
    {forests8.map(s => <polygon key={s} points={pts(s, v8)} fill="#dbe5c4" />)}
    <polygon points={pts(soundShape, v7)} fill="#abc6ef" />
    <polygon points={pts(hudsonShape, v7)} fill="#abc6ef" />
    <polygon points={pts(oceanShape, v8)} fill="#abc6ef" />
    {lakes7.map(s => <polygon key={s} points={pts(s, v7)} fill="#abc6ef" />)}
    <polyline points={pts('100,75 600,580 840,820 860,870', v7)} fill="none" stroke="#77777a" strokeWidth="2" strokeDasharray="6 4" />
    <polyline points={pts('1190,36 1190,210 1250,380 1030,610 1085,810', v7)} fill="none" stroke="#e0dfd9" strokeWidth="9" />
    <polyline points={pts('1190,36 1190,210 1250,380 1030,610 1085,810', v7)} fill="none" stroke="#77777a" strokeWidth="2" strokeDasharray="6 4" />
    {roads7.map(s => (
      <g key={s}>
        <polyline points={pts(s, v7)} fill="none" stroke="#c4b4d8" strokeWidth="4.5" />
        <polyline points={pts(s, v7)} fill="none" stroke="#e0d8ea" strokeWidth="1.5" />
      </g>
    ))}
    {roads8.map(s => (
      <g key={s}>
        <polyline points={pts(s, v8)} fill="none" stroke="#c4b4d8" strokeWidth="4.5" />
        <polyline points={pts(s, v8)} fill="none" stroke="#e0d8ea" strokeWidth="1.5" />
      </g>
    ))}
    <polyline points={pts('665,36 640,180 590,360 585,510 605,560', v7)} fill="none" stroke="#a6d8cb" strokeWidth="3.5" />
    <polyline points={pts('560,400 430,620 370,750 300,1000 250,1300 110,1520', v8)} fill="none" stroke="#a6d8cb" strokeWidth="4" />
    {routes.map(([t, [x, y]], i) => (
      <g key={i} transform={`translate(${x} ${y})`}>
        <rect x="-18" y="-13" width="36" height="26" rx="5" fill="#fff" stroke="#8a8a8a" strokeWidth="1.5" />
        <text y="6" textAnchor="middle" fontSize="16" fontWeight="700" fill="#333" fontFamily={CHART_FONT}>{t}</text>
      </g>
    ))}
    {interstates.map(([t, [x, y]], i) => (
      <g key={i} transform={`translate(${x} ${y})`}>
        <path d="M-17 -17q17 -4 34 0v18q0 12 -17 18q-17 -6 -17 -18z" fill="#6b74b8" />
        <path d="M-17 -17q17 -4 34 0v6h-34z" fill="#ea5a5a" />
        <text y="8" textAnchor="middle" fontSize="16" fontWeight="700" fill="#fff" fontFamily={CHART_FONT}>{t}</text>
      </g>
    ))}
  </MapLayer>
)

const MapBubbles = () => (
  <MapLayer width="1130" height="1146" viewBox="0 0 1130 1146">
    {bubbles.map(([x, y, r], i) => (
      <circle key={i} cx={x} cy={y} r={r} fill="#118dff" fillOpacity="0.6" stroke="#0056b8" strokeWidth="1.8" />
    ))}
  </MapLayer>
)

const LocationMap = () => (
  <MapBox>
    <MapBase />
    {places.map(([t, [x, y], size]) => (
      <MapLabel key={t} $size={size} style={{ left: x, top: y }}>{t}</MapLabel>
    ))}
    {bayNames.map(([t, [x, y]]) => (
      <MapLabel key={t} $size={24} $color="#5a6cc0" style={{ left: x, top: y }}>{t}</MapLabel>
    ))}
    <MapBubbles />
    <BingMark>
      <svg width="20" height="20" viewBox="0 0 20 20">
        <rect width="9.5" height="9.5" fill="#f25022" /><rect x="10.5" width="9.5" height="9.5" fill="#7fba00" />
        <rect y="10.5" width="9.5" height="9.5" fill="#00a4ef" /><rect x="10.5" y="10.5" width="9.5" height="9.5" fill="#ffb900" />
      </svg>
      Microsoft Bing
    </BingMark>
    <Attribution>
      <span>© 2022 TomTom, © 2022 Microsoft Corporation</span>
      <a>Terms</a>
    </Attribution>
  </MapBox>
)

const fields = [
  ['doLocationId', 0], ['endLat', 1], ['endLon', 1], ['extra', 1], ['fareAmount', 1], ['improvementSurc...', 0], ['mtaTax', 1],
  ['passengerCount', 1], ['paymentType', 0], ['puLocationId', 0], ['rateCodeId', 1], ['startLat', 1], ['startLon', 1],
  ['storeAndFwdFlag', 0], ['tipAmount', 1], ['tollsAmount', 1], ['totalAmount', 1], ['tpepDropoffDate...', 0],
  ['tpepPickupDateTi...', 0], ['tripDistance', 1], ['vendorID', 0],
]

const ribbonActions = [
  ['Explore', 'explore', true, true], ['Text box', 'text'], ['Shapes', 'shapes', true], ['Buttons', 'buttons', true],
  ['Visual interactions', 'interact', true], ['Refresh', 'refresh'], ['Duplicate this page', 'duplicate'], ['Save', 'save'],
]

export default function App() {
  return (
    <Page>
      <GlobalStyle />
      <TopBar>
        <TopItem $ml={39} $gap={15}><SynapseMark />Synapse live</TopItem>
        <TopItem $ml={41}><Chevron /></TopItem>
        <TopItem $ml={44} $gap={12}>
          <Line width="22" height="24" viewBox="0 0 22 24" $c="#1a73c8" $sw={1.3}><path d="M1 12l6 6L17 1M13 16h8M13 19h8M13 22h8" /></Line>
          Validate all
        </TopItem>
        <TopItem $ml={24} $gap={16} $off>
          <Line width="20" height="30" viewBox="0 0 20 30" $c="#a19f9d"><path d="M6 9H1v20h18V9h-5M10 22V1M5 6l5-5 5 5" /></Line>
          Publish all
        </TopItem>
        <TopRight>
          <Line width="24" height="26" viewBox="0 0 24 26" $c="#1a73c8" $sw={1.5}><path d="M14 3a11 11 0 1 1-7 1" /><path d="M9 1l5 2-2 5" /></Line>
          <Line width="20" height="26" viewBox="0 0 20 26" $c="#a19f9d"><path d="M2 5h14v20H2zM7 5V1h4v4M6 9v12M9 9v12M12 9v8M12 19h7M12 22h7" /></Line>
        </TopRight>
      </TopBar>
      <Body>
        <Sidebar>
          <SideHead>
            <SideTitle>Develop</SideTitle>
            <SideActions>
              <Line width="24" height="24" viewBox="0 0 24 24" $c="#1a73c8" $sw={1.4}><path d="M12 1v22M1 12h22" /></Line>
              <Line width="14" height="18" viewBox="0 0 14 18" $c="#323130" $sw={1.4}><path d="M1 1l6 7 6-7M1 9l6 7 6-7" /></Line>
              <Line width="15" height="16" viewBox="0 0 15 16" $c="#323130" $sw={1.4}><path d="M7 1L1 8l6 7M14 1L8 8l6 7" /></Line>
            </SideActions>
          </SideHead>
          <FilterBox>
            <Line width="17" height="20" viewBox="0 0 17 20" $c="#1a73c8"><path d="M1 1h15l-6 9v9l-3-2v-7z" /></Line>
            Filter resources by name
          </FilterBox>
          <RootRow $size={19}><Tri $mr={19} />Power BI<RowEnd>1</RowEnd></RootRow>
          <TreeRow $indent={44}>
            <Tri $mr={18} />
            <Line width="24" height="24" viewBox="0 0 24 24" $c="#323130" $sw={1.4} style={{ marginRight: 13 }}><path d="M1 1h16v16H1zM20 4v16H5M23 7v16H8" /></Line>
            PowerBIWorkspaceTest
          </TreeRow>
          <TreeRow $indent={94}>
            <Line width="18" height="24" viewBox="0 0 18 24" $c="#323130" $sw={1.4} style={{ marginRight: 15 }}><ellipse cx="9" cy="4" rx="8" ry="3" /><path d="M1 4v16c0 4 16 4 16 0V4M1 9c0 4 16 4 16 0M1 15c0 4 16 4 16 0" /></Line>
            Power BI datasets
          </TreeRow>
          <TreeRow $indent={74}>
            <Tri $mr={18} />
            <Line width="24" height="20" viewBox="0 0 24 20" $c="#323130" $sw={1.3} style={{ marginRight: 12 }}><path d="M1 1h9l2 3h11v15H1z" /></Line>
            Power BI reports
          </TreeRow>
          <TreeRow $indent={97} $selected>
            <Dot $mr={12} /><Bars />
            <span style={{ marginLeft: 14 }}>Synapse Test</span>
          </TreeRow>
        </Sidebar>
        <Main>
          <TabRow>
            <Tab><Bars /><b style={{ fontWeight: 600 }}>Synapse Test</b><Dot /></Tab>
            <TopRight>
              <Line width="20" height="20" viewBox="0 0 20 20" $c="#1a73c8"><path d="M2 18L18 2M11 2h7v7M2 11v7h7" /></Line>
              <Line width="24" height="6" viewBox="0 0 24 6" $c="#1a73c8" $sw={2.2}><path d="M2 3h2M11 3h2M20 3h2" /></Line>
            </TopRight>
          </TabRow>
          <Frame>
            <Ribbon>
              <RibbonMenu>File<Chevron /></RibbonMenu>
              <RibbonMenu>View<Chevron /></RibbonMenu>
              <RibbonRight>
                {ribbonActions.map(([label, icon, hasMenu, off]) => (
                  <RibbonItem key={label} $off={off}>
                    {ribbonIcons[icon]}{label}{hasMenu && <Chevron />}
                  </RibbonItem>
                ))}
              </RibbonRight>
            </Ribbon>
            <Workspace>
              <Canvas>
                <LeftColumn>
                  <ChartTitle $left={72}>Fare Amount by Pickup Time</ChartTitle>
                  <PickupChart />
                  <ChartTitle $left={111}>Fare Amount by Payment Type</ChartTitle>
                  <PaymentChart />
                </LeftColumn>
                <RightColumn>
                  <ChartTitle>Fare Amount by End Location</ChartTitle>
                  <LocationMap />
                </RightColumn>
              </Canvas>
              <Panel $w={301} $bg="#fff" $line>
                <PanelHead $left={17}>
                  <Line width="26" height="24" viewBox="0 0 26 24" $c="#252423" $sw={2.4}><path d="M2 2h22l-8 10v10h-6V12z" /></Line>
                  Filters
                  <div>
                    <Line width="20" height="14" viewBox="0 0 20 14" $c="#323130" $sw={1.6}><path d="M1 7a10 10 0 0 1 18 0" /><circle cx="10" cy="9" r="3" /></Line>
                    <DoubleRight />
                  </div>
                </PanelHead>
                <SearchBox $w={269} $h={46} $left={12} $gap={20} $pad={16}><Magnifier />Search</SearchBox>
                <Divider />
                <FilterTitle $mt={25}><span>Filters on this page</span><span>...</span></FilterTitle>
                <FilterDrop>Add data fields here</FilterDrop>
                <FilterTitle $mt={40}><span>Filters on all pages</span><span>...</span></FilterTitle>
                <FilterDrop>Add data fields here</FilterDrop>
              </Panel>
              <Panel $w={271} $line>
                <PanelHead $left={13} $right={13}>Visualizations<div><DoubleRight /></div></PanelHead>
                <BuildLabel>Build visual</BuildLabel>
                <VizTabs>
                  <VizTabButton $active>
                    <svg width="36" height="38" viewBox="0 0 36 38">
                      <path d="M2 1h28" stroke="#252423" strokeWidth="1.5" />
                      <rect x="1" y="8" width="34" height="12" fill="#f2c811" stroke="#252423" strokeDasharray="2 2" />
                      <rect x="1" y="25" width="34" height="12" fill="#f2c811" stroke="#252423" strokeDasharray="2 2" />
                    </svg>
                  </VizTabButton>
                  <VizTabButton>
                    <Line width="36" height="40" viewBox="0 0 36 40" $c="#252423" $sw={1.4}>
                      <path d="M26 15V10L17 1H1v38h7M17 1v9h9" /><path d="M11 38c5 0 8-2 10-7l14-14-8 5-10 12c-4 1-4 3-6 4z" fill="#fff" />
                    </Line>
                  </VizTabButton>
                </VizTabs>
                <VizGrid>
                  {vizIcons.map((icon, i) => <VizIcon key={i}>{icon}</VizIcon>)}
                </VizGrid>
                <WellLabel $mt={15}>Values</WellLabel>
                <Well $h={42} $mt={8} $pad={15}>Add data fields here</Well>
                <WellLabel $bold $mt={17}>Drill through</WellLabel>
                <SwitchRow $mt={15}>Cross-report<Switch>Off</Switch></SwitchRow>
                <SwitchRow $mt={15}>Keep all filters<Switch $on>On</Switch></SwitchRow>
                <Well $h={39} $mt={14} $pad={12}>Add drill-through fields here</Well>
              </Panel>
              <Panel $w={272}>
                <PanelHead $left={13} $right={8}>Fields<div><DoubleRight /></div></PanelHead>
                <SearchBox $w={263} $h={40} $left={6} $line="#8a8886" $gap={11} $pad={11}><Magnifier />Search</SearchBox>
                <TableRow>
                  <Line width="15" height="10" viewBox="0 0 15 10" $c="#605e5c"><path d="M1 1l6.5 7L14 1" /></Line>
                  <Line width="19" height="18" viewBox="0 0 19 18" $c="#323130" style={{ margin: '0 10px' }}><path d="M1 1h17v16H1zM1 5h17M1 9h17M1 13h17M7 5v12M12 5v12" /></Line>
                  nyc_tlc_yellow_trip_ext
                </TableRow>
                {fields.map(([name, numeric]) => (
                  <FieldRow key={name}>
                    <CheckBox />
                    <SigmaSlot>{numeric ? <Sigma /> : null}</SigmaSlot>
                    {name}
                  </FieldRow>
                ))}
              </Panel>
            </Workspace>
          </Frame>
        </Main>
      </Body>
    </Page>
  )
}
